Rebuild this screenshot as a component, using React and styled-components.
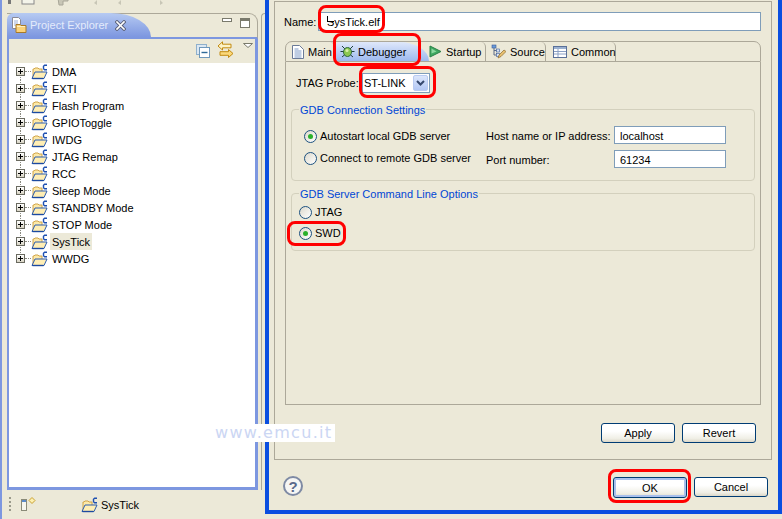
import React from "react";
import styled, { createGlobalStyle } from "styled-components";

const PROJECTS = [
  "DMA",
  "EXTI",
  "Flash Program",
  "GPIOToggle",
  "IWDG",
  "JTAG Remap",
  "RCC",
  "Sleep Mode",
  "STANDBY Mode",
  "STOP Mode",
  "SysTick",
  "WWDG",
];

const FolderIcon = () => (
  <svg width="17" height="16" viewBox="0 0 17 16">
    <path d="M2 14V5h1l1-1h3l1 1h3v3" fill="#fde9a8" stroke="#d0a448" />
    <path d="M1 14.500 4 8h12l-3 6.500z" fill="#ffeeb4" stroke="#2a5cb0" />
    <path d="M1.500 14.500h11" stroke="#1d4aa0" strokeWidth="1.4" />
    <path d="M16 1.200h-2.400l-1.100 1v2.600l1.100 1H16" fill="none" stroke="#1e50b0" strokeWidth="1.4" />
  </svg>
);

const ExplorerIcon = () => (
  <svg width="16" height="16" viewBox="0 0 16 16">
    <path d="M1.5.5h6l2 2v9h-8z" fill="#fff" stroke="#8a8a96" />
    <path d="M3 4h4M3 6h4M3 8h3" stroke="#9fb0d8" />
    <path d="M5 7.5h4l1 1h5v7H5z" fill="#fbd27a" stroke="#a87a28" />
    <path d="M6 9.5h8" stroke="#fff0c0" />
  </svg>
);

const CloseIcon = () => (
  <svg width="11" height="11" viewBox="0 0 11 11">
    <path d="M2 2l7 7M9 2l-7 7" stroke="#5a6078" strokeWidth="3.4" strokeLinecap="square" />
    <path d="M2 2l7 7M9 2l-7 7" stroke="#fff" strokeWidth="1.6" strokeLinecap="square" />
  </svg>
);

const MinimizeIcon = () => (
  <svg width="10" height="5" viewBox="0 0 10 5">
    <rect x=".5" y=".5" width="9" height="3" fill="#fff" stroke="#7a7a6c" />
  </svg>
);

const MaximizeIcon = () => (
  <svg width="10" height="10" viewBox="0 0 10 10">
    <rect x=".5" y=".5" width="9" height="9" fill="#fff" stroke="#7a7a6c" />
    <rect x="1" y="1" width="8" height="2" fill="#7a7a6c" />
  </svg>
);

const CollapseIcon = () => (
  <svg width="14" height="14" viewBox="0 0 14 14">
    <rect x=".5" y=".5" width="10" height="10" fill="#dbe7f2" stroke="#8fb0cc" />
    <rect x="3.5" y="3.5" width="10" height="10" fill="#fff" stroke="#6f98bb" />
    <path d="M5.5 8.5h6" stroke="#2f6a98" strokeWidth="1.4" />
  </svg>
);

const LinkIcon = () => (
  <svg width="17" height="18" viewBox="0 0 17 18">
    <path d="M5.5.8 1 5l4.5 4V6.8H14V3.2H5.5z" fill="#fdf3c8" stroke="#c28a10" />
    <path d="M11.5 8.5 16 12.5l-4.500 4v-2.200H3v-3.600h8.500z" fill="#fbd87a" stroke="#c28a10" />
  </svg>
);

const MenuIcon = () => (
  <svg width="10" height="5" viewBox="0 0 10 5">
    <path d="M.5.5h9L5 4.500z" fill="#fff" stroke="#7a7a6c" />
  </svg>
);

const FastViewIcon = () => (
  <svg width="15" height="14" viewBox="0 0 15 14">
    <rect x=".5" y="2.500" width="5" height="11" fill="#f6f6ee" stroke="#8a8a78" />
    <rect x="1" y="3" width="4" height="2" fill="#5a8ac8" />
    <path d="M11 .5l3 3-3 3-3-3z" fill="#fdf0b0" stroke="#c8a030" />
  </svg>
);

const PageIcon = () => (
  <svg width="12" height="14" viewBox="0 0 12 14">
    <path d="M.5.5h7l4 4v9H.5z" fill="#fff" stroke="#6a7a98" />
    <path d="M2.500 4h4M2.500 6h7M2.500 8h7M2.500 10h7M2.500 12h7" stroke="#7f9bc8" />
  </svg>
);

const BugIcon = () => (
  <svg width="15" height="15" viewBox="0 0 15 15">
    <path d="M2 2l3 3M13 2l-3 3M.5 7.500h3M14.500 7.500h-3M2 13l3-2.500M13 13l-3-2.500" stroke="#1f3f3a" />
    <ellipse cx="7.500" cy="8" rx="4" ry="4.500" fill="#8cc850" stroke="#2f6a40" />
    <circle cx="7" cy="6.500" r="1.500" fill="#d8f0a8" />
  </svg>
);

const PlayIcon = () => (
  <svg width="13" height="13" viewBox="0 0 13 13">
    <path d="M1 1l11 5.500L1 12z" fill="#3fa860" stroke="#2a8048" />
    <path d="M2.500 3.500l5 3-5 2z" fill="#8cd8a0" />
  </svg>
);

const SourceIcon = () => (
  <svg width="15" height="15" viewBox="0 0 15 15">
    <path d="M3 3v8h3M3 6.500h3" fill="none" stroke="#5a6a88" />
    <rect x="1" y="1" width="4" height="3" fill="#6a9ad8" stroke="#3a5a98" strokeWidth=".6" />
    <rect x="5.500" y="5" width="3" height="3" fill="#d8e4f4" stroke="#3a5a98" strokeWidth=".6" />
    <rect x="5.500" y="9.500" width="3" height="3" fill="#d8e4f4" stroke="#3a5a98" strokeWidth=".6" />
    <path d="M7 14l1-3 5-5 2 1.500-5 5z" fill="#e8c070" stroke="#8a6a30" strokeWidth=".7" />
  </svg>
);

const TableIcon = () => (
  <svg width="14" height="12" viewBox="0 0 14 12">
    <rect x=".5" y=".5" width="13" height="11" fill="#fff" stroke="#5a7098" />
    <rect x="1" y="1" width="12" height="2" fill="#9ab0d0" />
    <path d="M1 5.500h12M1 8h12M5 3v8" stroke="#8aa0c4" />
  </svg>
);

const ToolbarScraps = () => (
  <svg width="170" height="6" viewBox="0 0 170 6">
    <rect x="8" y="0" width="3" height="4" fill="#777" />
    <rect x="22" y="-3" width="12" height="7" fill="#f4f4ea" stroke="#888" />
    <path d="M58-2h10v3h-5v4h-4z" fill="#c8c6b6" stroke="#a8a698" />
    <path d="M97 0l-3 3 3 2zM121 0l-3 3 3 2zM160 0l3 3-3 2z" fill="#c8c6b6" />
  </svg>
);

export default function App() {
  return (
    <Page>
      <GlobalStyle />
      <Sidebar>
        <TopScraps>
          <ToolbarScraps />
        </TopScraps>
        <Workbench>
          <ExplorerPanel>
            <PanelHeader>
              <ViewTab>
                <ExplorerIcon />
                <ViewTitle>Project Explorer</ViewTitle>
                <CloseIcon />
              </ViewTab>
              <WindowControls>
                <MinimizeIcon />
                <MaximizeIcon />
              </WindowControls>
            </PanelHeader>
            <PanelBody>
              <ViewToolbar>
                <CollapseIcon />
                <LinkIcon />
                <MenuSlot>
                  <MenuIcon />
                </MenuSlot>
              </ViewToolbar>
              <Tree>
                {PROJECTS.map((name, i) => (
                  <TreeRow key={name} $first={i === 0} $last={i === PROJECTS.length - 1}>
                    <Expander />
                    <FolderIcon />
                    <TreeLabel $selected={name === "SysTick"}>{name}</TreeLabel>
                  </TreeRow>
                ))}
              </Tree>
            </PanelBody>
          </ExplorerPanel>
          <NeighbourEdge />
        </Workbench>
        <StatusBar>
          <Grip />
          <FastViewIcon />
          <StatusItem>
            <FolderIcon />
            SysTick
          </StatusItem>
        </StatusBar>
      </Sidebar>

      <Dialog>
        <ConfigFrame>
          <NameRow>
            <NameLabel>Name:</NameLabel>
            <NameInput>
              <Caret />
              SysTick.elf
            </NameInput>
          </NameRow>

          <TabFolder>
            <TabBar>
              <Tab $width={49} $pad={6}>
                <PageIcon />
                Main
              </Tab>
              <SelectedTab>
                <BugIcon />
                Debugger
              </SelectedTab>
              <Tab $width={61} $pad={4} $overlap>
                <PlayIcon />
                Startup
              </Tab>
              <Tab $width={60} $pad={5}>
                <SourceIcon />
                Source
              </Tab>
              <Tab $width={70} $pad={7}>
                <TableIcon />
                Common
              </Tab>
            </TabBar>

            <TabPanel>
              <ProbeRow>
                <ProbeLabel>JTAG Probe:</ProbeLabel>
                <Combo>
                  ST-LINK
                  <ComboButton>
                    <svg width="9" height="6" viewBox="0 0 9 6">
                      <path d="M1 1l3.500 3.500L8 1" fill="none" stroke="#35486e" strokeWidth="2" />
                    </svg>
                  </ComboButton>
                </Combo>
              </ProbeRow>

              <Group $height={72}>
                <Legend>GDB Connection Settings</Legend>
                <ConnectionGrid>
                  <RadioColumn>
                    <RadioRow $pad={12}>
                      <Radio $checked />
                      Autostart local GDB server
                    </RadioRow>
                    <RadioRow $pad={12}>
                      <Radio />
                      Connect to remote GDB server
                    </RadioRow>
                  </RadioColumn>
                  <HostColumn>
                    <HostRow>
                      <HostLabel>Host name or IP address:</HostLabel>
                      <TextField>localhost</TextField>
                    </HostRow>
                    <HostRow>
                      <HostLabel>Port number:</HostLabel>
                      <TextField>61234</TextField>
                    </HostRow>
                  </HostColumn>
                </ConnectionGrid>
              </Group>

              <Group $height={58}>
                <Legend>GDB Server Command Line Options</Legend>
                <OptionColumn>
                  <RadioRow $pad={7}>
                    <Radio />
                    JTAG
                  </RadioRow>
                  <RadioRow $pad={7}>
                    <Radio $checked />
                    SWD
                  </RadioRow>
                </OptionColumn>
              </Group>
            </TabPanel>
          </TabFolder>

          <ApplyRow>
            <PushButton>Apply</PushButton>
            <PushButton>Revert</PushButton>
          </ApplyRow>
        </ConfigFrame>

        <DialogFooter>
          <HelpButton>?</HelpButton>
          <FooterButtons>
            <PushButton $default>OK</PushButton>
            <PushButton>Cancel</PushButton>
          </FooterButtons>
        </DialogFooter>
      </Dialog>

      <Ring $x={318} $y={5} $w={67} $h={28} />
      <Ring $x={333} $y={33} $w={88} $h={33} />
      <Ring $x={359} $y={66} $w={77} $h={32} />
      <Ring $x={287} $y={221} $w={59} $h={25} />
      <Ring $x={608} $y={469} $w={83} $h={34} />
      <Watermark>www.emcu.it</Watermark>
    </Page>
  );
}

const GlobalStyle = createGlobalStyle`
  html, body {
    margin: 0;
    padding: 0;
  }
  body {
    font-family: "Liberation Sans", "Noto Sans", sans-serif;
    font-size: 11px;
    color: #000;
    background: #ece9d8;
  }
  svg {
    display: block;
    flex: none;
  }
`;

const Page = styled.div`
  position: relative;
  display: flex;
  width: 782px;
  height: 519px;
  overflow: hidden;
  background: #ece9d8;
`;

const Sidebar = styled.div`
  display: flex;
  flex-direction: column;
  width: 263px;
  border-left: 2px solid #7d97e0;
`;

const TopScraps = styled.div`
  height: 13px;
  margin-left: -2px;
`;

const Workbench = styled.div`
  display: flex;
  gap: 3px;
  height: 477px;
  padding-left: 5px;
`;

const ExplorerPanel = styled.div`
  display: flex;
  flex-direction: column;
  width: 251px;
`;

const PanelHeader = styled.div`
  display: flex;
  justify-content: space-between;
  height: 26px;
  box-sizing: border-box;
  border-top: 1px solid #aca899;
  border-right: 1px solid #aca899;
  border-bottom: 2px solid #7d97e0;
  border-top-right-radius: 9px;
`;

const ViewTab = styled.div`
  display: flex;
  align-items: center;
  gap: 3px;
  width: 144px;
  height: 24px;
  margin-top: -1px;
  padding-left: 4px;
  box-sizing: border-box;
  background: linear-gradient(#b6caf2, #7d97e0);
  border-radius: 7px 44px 0 0 / 7px 26px 0 0;
`;

const ViewTitle = styled.span`
  width: 82px;
  color: #e4ebfb;
  white-space: nowrap;
`;

const WindowControls = styled.div`
  display: flex;
  align-items: flex-start;
  gap: 8px;
  padding: 4px 7px 0 0;
`;

const PanelBody = styled.div`
  display: flex;
  flex-direction: column;
  flex: 1;
  border-left: 2px solid #7d97e0;
  border-right: 3px solid #7d97e0;
  border-bottom: 3px solid #7d97e0;
`;

const ViewToolbar = styled.div`
  display: flex;
  align-items: flex-start;
  height: 24px;
  padding: 5px 0 0 187px;
  box-sizing: border-box;

  & > svg:nth-child(2) {
    margin: -3px 0 0 7px;
  }
`;

const MenuSlot = styled.div`
  margin: -1px 0 0 9px;
`;

const Tree = styled.div`
  flex: 1;
  background: #fff;
`;

const TreeRow = styled.div`
  position: relative;
  display: flex;
  align-items: center;
  height: 17px;
  padding-left: 7px;

  &::before {
    content: "";
    position: absolute;
    left: 11px;
    top: ${(p) => (p.$first ? "8px" : "0")};
    bottom: ${(p) => (p.$last ? "8px" : "0")};
    border-left: 1px dotted #8a8a80;
  }

  & > svg {
    margin: 0 4px 0 6px;
  }
`;

const Expander = styled.span`
  position: relative;
  z-index: 1;
  width: 9px;
  height: 9px;
  box-sizing: border-box;
  border: 1px solid #6a6a60;
  background:
    linear-gradient(#000, #000) center / 5px 1px no-repeat,
    linear-gradient(#000, #000) center / 1px 5px no-repeat,
    linear-gradient(#fff, #d8d4c4);

  &::after {
    content: "";
    position: absolute;
    left: 8px;
    top: 3px;
    width: 6px;
    border-top: 1px dotted #8a8a80;
  }
`;

const TreeLabel = styled.span`
  display: flex;
  align-items: center;
  height: 17px;
  margin-left: -2px;
  padding: 0 2px;
  background: ${(p) => (p.$selected ? "#ece9d8" : "transparent")};
  white-space: nowrap;
`;

const NeighbourEdge = styled.div`
  width: 4px;
  box-sizing: border-box;
  border-left: 1px solid #aca899;
  border-top: 1px solid #aca899;
  border-top-left-radius: 5px;
`;

const StatusBar = styled.div`
  display: flex;
  align-items: flex-start;
  flex: 1;
  padding: 7px 0 0 7px;
`;

const Grip = styled.span`
  width: 2px;
  height: 14px;
  margin-right: 10px;
  background: repeating-linear-gradient(#9a9a8c 0 2px, transparent 2px 4px);
`;

const StatusItem = styled.div`
  display: flex;
  align-items: center;
  gap: 3px;
  margin-left: 45px;
`;

const Dialog = styled.div`
  display: flex;
  flex-direction: column;
  width: 517px;
  height: 514px;
  box-sizing: border-box;
  padding: 1px 6px 0 5px;
  border: 4px solid #0a4ee0;
  border-top: none;
  background: #ece9d8;
`;

const ConfigFrame = styled.div`
  display: flex;
  flex-direction: column;
  height: 459px;
  box-sizing: border-box;
  padding: 10px 10px 0;
  border: 1px solid #aca899;
`;

const NameRow = styled.div`
  display: flex;
  align-items: center;
  height: 19px;
  margin-left: -1px;
`;

const NameLabel = styled.span`
  width: 34px;
  white-space: nowrap;
`;

const NameInput = styled.div`
  position: relative;
  display: flex;
  align-items: center;
  flex: 1;
  height: 19px;
  box-sizing: border-box;
  padding-left: 8px;
  background: #fff;
  border: 1px solid #7f9db9;
`;

const Caret = styled.span`
  position: absolute;
  left: 8px;
  top: 3px;
  width: 6px;
  height: 5px;
  background: #fff;
  border-left: 1px solid #000;
  border-bottom: 1px solid #000;
`;

const TabFolder = styled.div`
  display: flex;
  flex-direction: column;
  margin-top: 10px;
`;

const TabBar = styled.div`
  display: flex;
  height: 21px;
  box-sizing: border-box;
  border: 1px solid #aca899;
  border-radius: 7px 7px 0 0;
`;

const Tab = styled.div`
  position: relative;
  display: flex;
  align-items: center;
  gap: 4px;
  width: ${(p) => p.$width}px;
  margin-left: ${(p) => (p.$overlap ? "-4px" : "0")};
  padding-left: ${(p) => p.$pad}px;
  box-sizing: border-box;
  border-right: 1px solid #aca899;
  border-top-right-radius: 5px;
  white-space: nowrap;
`;

const SelectedTab = styled.div`
  display: flex;
  align-items: center;
  gap: 3px;
  width: 94px;
  padding-left: 5px;
  box-sizing: border-box;
  background: linear-gradient(#dfe8fa, #9db9ef);
  border-radius: 5px 30px 0 0 / 5px 19px 0 0;
`;

const TabPanel = styled.div`
  display: flex;
  flex-direction: column;
  height: 343px;
  box-sizing: border-box;
  padding: 11px 5px 0;
  border: 1px solid #aca899;
  border-top: none;
`;

const ProbeRow = styled.div`
  display: flex;
  align-items: center;
  gap: 5px;
  height: 20px;
  margin: 0 0 16px 5px;
`;

const ProbeLabel = styled.span`
  width: 61px;
  white-space: nowrap;
`;

const Combo = styled.div`
  display: flex;
  align-items: center;
  justify-content: space-between;
  width: 68px;
  height: 20px;
  box-sizing: border-box;
  padding: 0 1px;
  background: #fff;
  border: 1px solid #7f9db9;
`;

const ComboButton = styled.span`
  display: flex;
  align-items: center;
  justify-content: center;
  width: 15px;
  height: 16px;
  box-sizing: border-box;
  background: linear-gradient(#dce6fb, #b3c8f5);
  border: 1px solid #b9cbf2;
  border-radius: 2px;
`;

const Group = styled.div`
  height: ${(p) => p.$height}px;
  box-sizing: border-box;
  margin-bottom: 12px;
  border: 1px solid #d3d0bd;
  border-radius: 4px;
`;

const Legend = styled.div`
  width: fit-content;
  height: 14px;
  line-height: 14px;
  margin: -7px 0 0 7px;
  padding: 0 1px;
  color: #0046d5;
  background: #ece9d8;
  white-space: nowrap;
`;

const ConnectionGrid = styled.div`
  display: grid;
  grid-template-columns: 194px 1fr;
`;

const RadioColumn = styled.div`
  display: flex;
  flex-direction: column;
  gap: 8px;
  padding-top: 12px;
`;

const RadioRow = styled.div`
  display: flex;
  align-items: center;
  gap: 3px;
  height: 14px;
  padding-left: ${(p) => p.$pad}px;
  white-space: nowrap;
`;

const Radio = styled.span`
  display: flex;
  align-items: center;
  justify-content: center;
  width: 13px;
  height: 13px;
  box-sizing: border-box;
  border: 1px solid #1c5180;
  border-radius: 50%;
  background: linear-gradient(135deg, #dcd9cc, #fff);

  &::after {
    content: "";
    display: ${(p) => (p.$checked ? "block" : "none")};
    width: 5px;
    height: 5px;
    border-radius: 50%;
    background: #2bb02b;
  }
`;

const HostColumn = styled.div`
  display: flex;
  flex-direction: column;
  gap: 6px;
  padding-top: 9px;
`;

const HostRow = styled.div`
  display: flex;
  align-items: center;
`;

const HostLabel = styled.span`
  width: 128px;
  padding-top: 1px;
  white-space: nowrap;
`;

const TextField = styled.div`
  display: flex;
  align-items: center;
  width: 112px;
  height: 18px;
  box-sizing: border-box;
  padding: 1px 0 0 5px;
  background: #fff;
  border: 1px solid #7f9db9;
`;

const OptionColumn = styled.div`
  display: flex;
  flex-direction: column;
  gap: 7px;
  padding-top: 4px;
`;

const ApplyRow = styled.div`
  display: flex;
  justify-content: flex-end;
  gap: 7px;
  padding: 18px 5px 0 0;
`;

const DialogFooter = styled.div`
  display: flex;
  justify-content: space-between;
  flex: 1;
  padding: 16px 4px 0 9px;
`;

const FooterButtons = styled.div`
  display: flex;
  gap: 7px;
  padding-top: 1px;
`;

const PushButton = styled.button`
  width: 74px;
  height: ${(p) => (p.$default ? "21px" : "20px")};
  padding: 0;
  font: inherit;
  color: #000;
  border: 1px solid #003c74;
  border-radius: 3px;
  background: linear-gradient(#fff 40%, #f0efe6 80%, #dcd8c8);
  box-shadow: ${(p) => (p.$default ? "inset 0 0 0 2px #a9c0ec" : "none")};
`;

const HelpButton = styled.div`
  display: flex;
  align-items: center;
  justify-content: center;
  width: 20px;
  height: 20px;
  box-sizing: border-box;
  border: 2px solid #7e8aa4;
  border-radius: 50%;
  background: #f6f6f4;
  color: #5a6a8c;
  font-family: "Liberation Sans", sans-serif;
  font-size: 15px;
  font-weight: 700;
`;

const Ring = styled.div`
  position: absolute;
  left: ${(p) => p.$x}px;
  top: ${(p) => p.$y}px;
  width: ${(p) => p.$w}px;
  height: ${(p) => p.$h}px;
  box-sizing: border-box;
  border: 3px solid #f00;
  border-radius: 8px;
`;

const Watermark = styled.div`
  position: absolute;
  left: 213px;
  top: 424px;
  width: 122px;
  height: 18px;
  padding-left: 2px;
  box-sizing: border-box;
  line-height: 18px;
  background: #fff;
  color: #cbd6f3;
  font-family: "DejaVu Sans", sans-serif;
  font-size: 16px;
  letter-spacing: 1.3px;
  white-space: nowrap;
`;
